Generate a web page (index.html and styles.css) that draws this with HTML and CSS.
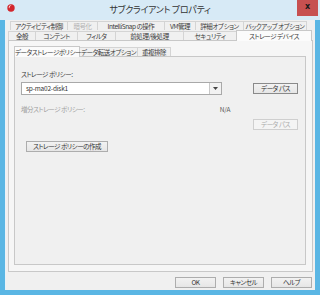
FILE: index.html
```html
<!DOCTYPE html>
<html lang="ja">
<head>
<meta charset="utf-8">
<link rel="stylesheet" href="styles.css">
</head>
<body>
<div class="win">
  <div class="titlebar">
    <svg class="appicon" width="8" height="8" viewBox="0 0 8 8">
      <circle cx="4" cy="4" r="3.7" fill="#d3262c"/>
      <path d="M1.6 3.2 A2.6 2.6 0 0 1 4.6 1.4 A2.2 2.2 0 0 0 2.6 4.4 Z" fill="#ffffff"/>
    </svg>
    <div class="title">サブクライアント プロパティ</div>
    <div class="close">x</div>
  </div>
  <div class="client">
    <div class="tabrow row1">
      <div class="tab t-act">アクティビティ制御</div>
      <div class="tab t-enc dis">暗号化</div>
      <div class="tab t-snap">IntelliSnap の操作</div>
      <div class="tab t-vm">VM管理</div>
      <div class="tab t-adv">詳細オプション</div>
      <div class="tab t-bk">バックアップ オプション</div>
    </div>
    <div class="tabrow row2">
      <div class="tab t-gen">全般</div>
      <div class="tab t-cont">コンテント</div>
      <div class="tab t-fil">フィルタ</div>
      <div class="tab t-pre">前処理/後処理</div>
      <div class="tab t-sec">セキュリティ</div>
      <div class="tab t-sto sel">ストレージ デバイス</div>
    </div>
    <div class="outer-panel">
      <div class="tabrow inner-tabs">
        <div class="tab i-pol sel">データストレージポリシー</div>
        <div class="tab i-xfer">データ転送オプション</div>
        <div class="tab i-dedup">重複排除</div>
      </div>
      <div class="inner-panel">
        <div class="label">ストレージ ポリシー:</div>
        <div class="row sp-row">
          <div class="combo">
            <span class="combo-text">sp-ma02-disk1</span>
            <span class="combo-btn"><svg width="5" height="3" viewBox="0 0 5 3"><path d="M0 0H5L2.5 3Z" fill="#444"/></svg></span>
          </div>
          <div class="btn btn-path">データ パス</div>
        </div>
        <div class="row inc-row">
          <div class="label dis">増分ストレージ ポリシー:</div>
          <div class="na">N/A</div>
        </div>
        <div class="row path2-row">
          <div class="btn btn-path disabled">データ パス</div>
        </div>
        <div class="row create-row">
          <div class="btn btn-create">ストレージ ポリシーの作成</div>
        </div>
      </div>
    </div>
    <div class="footer">
      <div class="btn fbtn">OK</div>
      <div class="btn fbtn">キャンセル</div>
      <div class="btn fbtn">ヘルプ</div>
    </div>
  </div>
</div>
</body>
</html>
```

FILE: styles.css
```css
* { box-sizing: border-box; }
html, body { margin: 0; padding: 0; background: #ffffff; }
body {
  font-family: "Noto Sans CJK JP", "Liberation Sans", sans-serif;
  font-feature-settings: "palt";
  color: #333;
}
.win {
  width: 320px;
  height: 295px;
  background: #5ab6e4;
  display: flex;
  flex-direction: column;
}
.titlebar {
  height: 20px;
  background: #d7eaf6;
  display: grid;
  grid-template-columns: 1fr auto 1fr;
  align-items: start;
}
.appicon { justify-self: start; margin: 4px 0 0 7px; }
.title {
  font-size: 9px;
  line-height: 20px;
  color: #333;
  letter-spacing: -0.3px;
}
.close {
  justify-self: end;
  margin-right: 2px;
  width: 21px;
  height: 16px;
  background: #c75050;
  color: #1a1a1a;
  font-family: "DejaVu Sans", sans-serif;
  font-weight: bold;
  font-size: 8px;
  line-height: 14px;
  text-align: center;
}
.client {
  flex: 1;
  margin: 0 5px 5px 5px;
  background: #f0f0f0;
  padding: 1px 2px 0 2px;
  display: flex;
  flex-direction: column;
  border-left: 1px solid #e8f2f9;
}
.tabrow { display: flex; align-items: flex-end; }
.tab {
  height: 9px;
  font-size: 6.5px;
  line-height: 8px;
  letter-spacing: -0.45px;
  text-align: center;
  white-space: nowrap;
  overflow: visible;
  background: #f0f0f0;
  border: 1px solid #d4d4d4;
  border-bottom: none;
  margin-right: -1px;
  color: #3a3a3a;
}
.tab.dis { color: #b0b0b0; }
.row1 { margin-left: 2px; }
.row2 { margin-left: 0px; }
.t-act { width: 58px; }
.t-enc { width: 31px; }
.t-snap { width: 68px; }
.t-vm { width: 32px; }
.t-adv { width: 49px; }
.t-bk { width: 64px; }
.t-gen { width: 28px; }
.t-cont { width: 43px; }
.t-fil { width: 39px; }
.t-pre { width: 69px; }
.t-sec { width: 54px; }
.t-sto { width: 76px; }
.tab.sel {
  background: #fbfbfb;
  height: 11px;
  margin-bottom: -1px;
  position: relative;
  z-index: 1;
  border-color: #c8c8c8;
  line-height: 10px;
}
.outer-panel {
  height: 232px;
  border: 1px solid #c8c8c8;
  background: #f6f6f6;
  padding: 5px 6px 6px 5px;
  display: flex;
  flex-direction: column;
}
.inner-tabs .tab { height: 9px; }
.inner-tabs .tab.sel { height: 11px; }
.i-pol { width: 66px; }
.i-xfer { width: 59px; }
.i-dedup { width: 34px; }
.inner-panel {
  flex: 1;
  border: 1px solid #c8c8c8;
  background: #f0f0f0;
  padding: 12px 7px 0 6px;
  display: flex;
  flex-direction: column;
}
.label {
  font-size: 6.5px;
  line-height: 10px;
  height: 10px;
  letter-spacing: -0.45px;
  color: #3a3a3a;
  white-space: nowrap;
}
.label.dis { color: #a0a0a0; }
.row { display: flex; align-items: flex-start; }
.sp-row { margin-top: 3px; justify-content: space-between; }
.combo {
  width: 201px;
  height: 13px;
  background: #fff;
  border: 1px solid #a9a9a9;
  display: flex;
  align-items: stretch;
}
.combo-text {
  flex: 1;
  font-size: 6.5px;
  line-height: 11px;
  padding-left: 4px;
  letter-spacing: -0.2px;
  color: #333;
}
.combo-btn {
  width: 12px;
  border-left: 1px solid #c8c8c8;
  background: #f2f2f2;
  display: flex;
  align-items: center;
  justify-content: center;
}
.btn {
  height: 11px;
  border: 1px solid #adadad;
  background: linear-gradient(#f2f2f2, #e6e6e6);
  font-size: 6.5px;
  line-height: 9px;
  letter-spacing: -0.45px;
  text-align: center;
  white-space: nowrap;
  color: #333;
}
.btn-path { width: 45px; margin-top: 1px; border-color: #8a8a8a; }
.btn-path.disabled { border-color: #cfcfcf; background: #f4f4f4; color: #ababab; }
.inc-row { margin-top: 9px; }
.na {
  margin-left: 135px;
  font-size: 6.5px;
  line-height: 10px;
  color: #555;
}
.path2-row { margin-top: 4px; justify-content: flex-end; }
.create-row { margin-top: 11px; padding-left: 5px; }
.btn-create { width: 82px; }
.footer {
  margin-top: 5px;
  display: flex;
  justify-content: flex-end;
  gap: 7px;
  padding-right: 1px;
}
.fbtn { width: 41px; }
```
